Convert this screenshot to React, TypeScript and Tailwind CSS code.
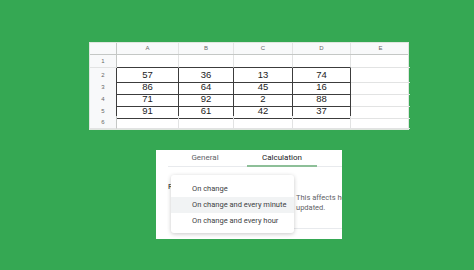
const cols = ["A", "B", "C", "D", "E"];
const colWidths = "grid-cols-[27px_62px_55px_59px_58px_59px]";
const data = [
  [57, 36, 13, 74],
  [86, 64, 45, 16],
  [71, 92, 2, 88],
  [91, 61, 42, 37],
];

const rowHeights = ["h-[13px]", "h-[12px]", "h-[12px]", "h-[12px]", "h-[12px]", "h-[13px]"];

function Sheet() {
  return (
    <div className="w-[320px] bg-white font-['Liberation_Sans',Arial,sans-serif] border border-[#dfe6df]">
      <div className={`grid ${colWidths} h-[12px] bg-[#f8f9fa] border-b border-[#c4c7c5]`}>
        <div className="border-r border-[#c4c7c5]" />
        {cols.map((c) => (
          <div key={c} className="flex items-center justify-center text-[6px] text-[#666] border-r border-[#e2e3e3] last:border-r-0">
            {c}
          </div>
        ))}
      </div>
      {rowHeights.map((h, r) => {
        const rowData = r >= 1 && r <= 4 ? data[r - 1] : null;
        return (
          <div key={r} className={`grid ${colWidths} ${h}`}>
            <div className="flex items-center justify-center bg-[#f8f9fa] text-[6px] text-[#666] border-r border-b border-r-[#c4c7c5] border-b-[#e2e3e3]">
              {r + 1}
            </div>
            {cols.map((c, ci) => {
              const inRange = rowData !== null && ci < 4;
              const aboveRange = r === 0 && ci < 4;
              const leftOfRange = rowData !== null && ci === 3;
              const bottomDark = inRange || aboveRange;
              const rightDark = inRange || leftOfRange;
              return (
                <div
                  key={c}
                  className={`flex items-center justify-center text-[9.5px] text-[#222] border-b border-r ${
                    bottomDark ? "border-b-[#3c3c3c]" : "border-b-[#e2e3e3]"
                  } ${rightDark ? "border-r-[#3c3c3c]" : "border-r-[#e2e3e3]"} ${
                    inRange && ci === 0 ? "border-l border-l-[#3c3c3c] -ml-px" : ""
                  } ${ci === 4 ? "border-r-0" : ""}`}
                >
                  {inRange ? rowData![ci] : ""}
                </div>
              );
            })}
          </div>
        );
      })}
    </div>
  );
}

function SettingsPanel() {
  return (
    <div className="relative w-[186px] h-[89px] bg-white overflow-hidden font-['Roboto',Arial,sans-serif]">
      <div className="flex ml-[12px] h-[17px] border-b border-[#e8eaed]">
        <div className="w-[74px] flex items-center justify-center text-[8px] text-[#5f6368]">General</div>
        <div className="ml-[5px] w-[70px] flex items-center justify-center text-[8px] text-[#202124] border-b-2 border-[#8dbf98] -mb-px">
          Calculation
        </div>
      </div>
      <div className="flex mt-[14px] ml-[12px] h-[12px] text-[8px] leading-[12px] text-[#202124]">
        <span>Recalculation</span>
      </div>
      <div className="ml-[140px] text-[7.5px] leading-[10px] text-[#5f6368] whitespace-nowrap">
        <div>This affects how often</div>
        <div>updated.</div>
      </div>
      <div className="ml-[138px] mt-[15px] h-px bg-[#e8eaed]" />
      <div className="absolute left-[15px] top-[25px] w-[123px] h-[58px] bg-white rounded-[3px] shadow-[0_1px_4px_rgba(0,0,0,0.22)] pt-[6px] text-[7.5px] text-[#3c4043]">
        <div className="h-[16px] flex items-center pl-[21px]">On change</div>
        <div className="h-[16px] flex items-center pl-[21px] bg-[#f1f3f4]">On change and every minute</div>
        <div className="h-[16px] flex items-center pl-[21px]">On change and every hour</div>
      </div>
    </div>
  );
}

export default function App() {
  return (
    <div className="w-[474px] h-[270px] bg-[#35a853] pt-[42px] pl-[89px] overflow-hidden">
      <Sheet />
      <div className="mt-[20px] ml-[67px]">
        <SettingsPanel />
      </div>
    </div>
  );
}
